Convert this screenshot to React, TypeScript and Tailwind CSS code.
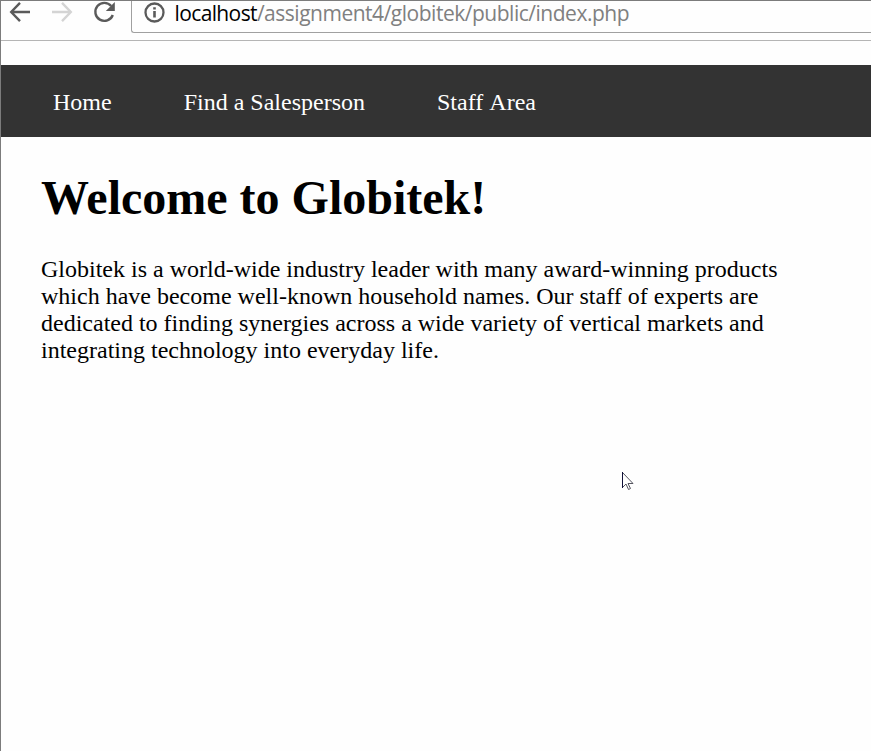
export default function App() {
  return (
    <div className="relative flex h-[751px] w-[871px] flex-col overflow-hidden border-l border-t border-[#7c7c7c] bg-[#fefefe]">
      <header className="flex h-10 shrink-0 border-b border-[#b5b5b5] bg-[#fefefe]">
        <svg width="130" height="39" viewBox="1 1 130 39" fill="none" stroke="#5a5a5a" strokeWidth="2.4">
          <path d="M30 12H11.500M20 2.800L11.200 12l8.800 9.200" />
          <path d="M52 12h18.500M62 2.800l8.800 9.200l-8.800 9.200" stroke="#d4d4d4" />
          <path d="M111.200 6A9 9 0 1 0 112.800 15" />
          <path d="M114.800 2v9h-9z" fill="#5a5a5a" stroke="none" />
        </svg>
        <div className="flex h-8 flex-1 items-start rounded-bl-[3px] border-b border-l border-[#a0a0a0]">
          <svg className="ml-3 mt-[1px] shrink-0" width="21" height="21" viewBox="0 0 21 21" fill="none" stroke="#5a5a5a" strokeWidth="2.300">
            <circle cx="10.500" cy="10.500" r="9" />
            <path d="M10.500 9v6.500M10.500 5.200v2.300" strokeWidth="2.600" />
          </svg>
          <div className="ml-[9.500px] whitespace-nowrap font-['Open_Sans',sans-serif] text-[21px] leading-[24px] tracking-[-0.485px] text-[#808080]">
            <span className="tracking-[-0.62px] text-black">localhost</span>/assignment4/globitek/public/index.php
          </div>
        </div>
      </header>
      <nav className="mt-6 flex h-[72px] shrink-0 items-center gap-[72px] bg-[#333] pl-[52px] pt-[2px] font-['Liberation_Serif',serif] text-[24px] text-white">
        <a>Home</a>
        <a>Find a Salesperson</a>
        <a className="[word-spacing:1.5px]">Staff Area</a>
      </nav>
      <main className="px-10 font-['Liberation_Serif',serif] text-black">
        <h1 className="mt-[33px] text-[48px] font-bold leading-[55px]">Welcome to Globitek!</h1>
        <p className="mt-[31px] text-[24px] leading-[27px]">
          Globitek is a world-wide industry leader with many award-winning products<br />
          which have become well-known household names. Our staff of experts are<br />
          dedicated to finding synergies across a wide variety of vertical markets and<br />
          integrating technology into everyday life.
        </p>
      </main>
      <svg className="absolute left-[620px] top-[470px]" width="14" height="21" viewBox="0 0 14 21" fill="white" stroke="#555560" strokeWidth="1">
        <path d="M1.500 1.500v15l3.500-3.500l2.500 5.500l2-1l-2.500-5h5z" />
        <path d="M1.500 1v16" stroke="#101038" />
      </svg>
    </div>
  );
}
